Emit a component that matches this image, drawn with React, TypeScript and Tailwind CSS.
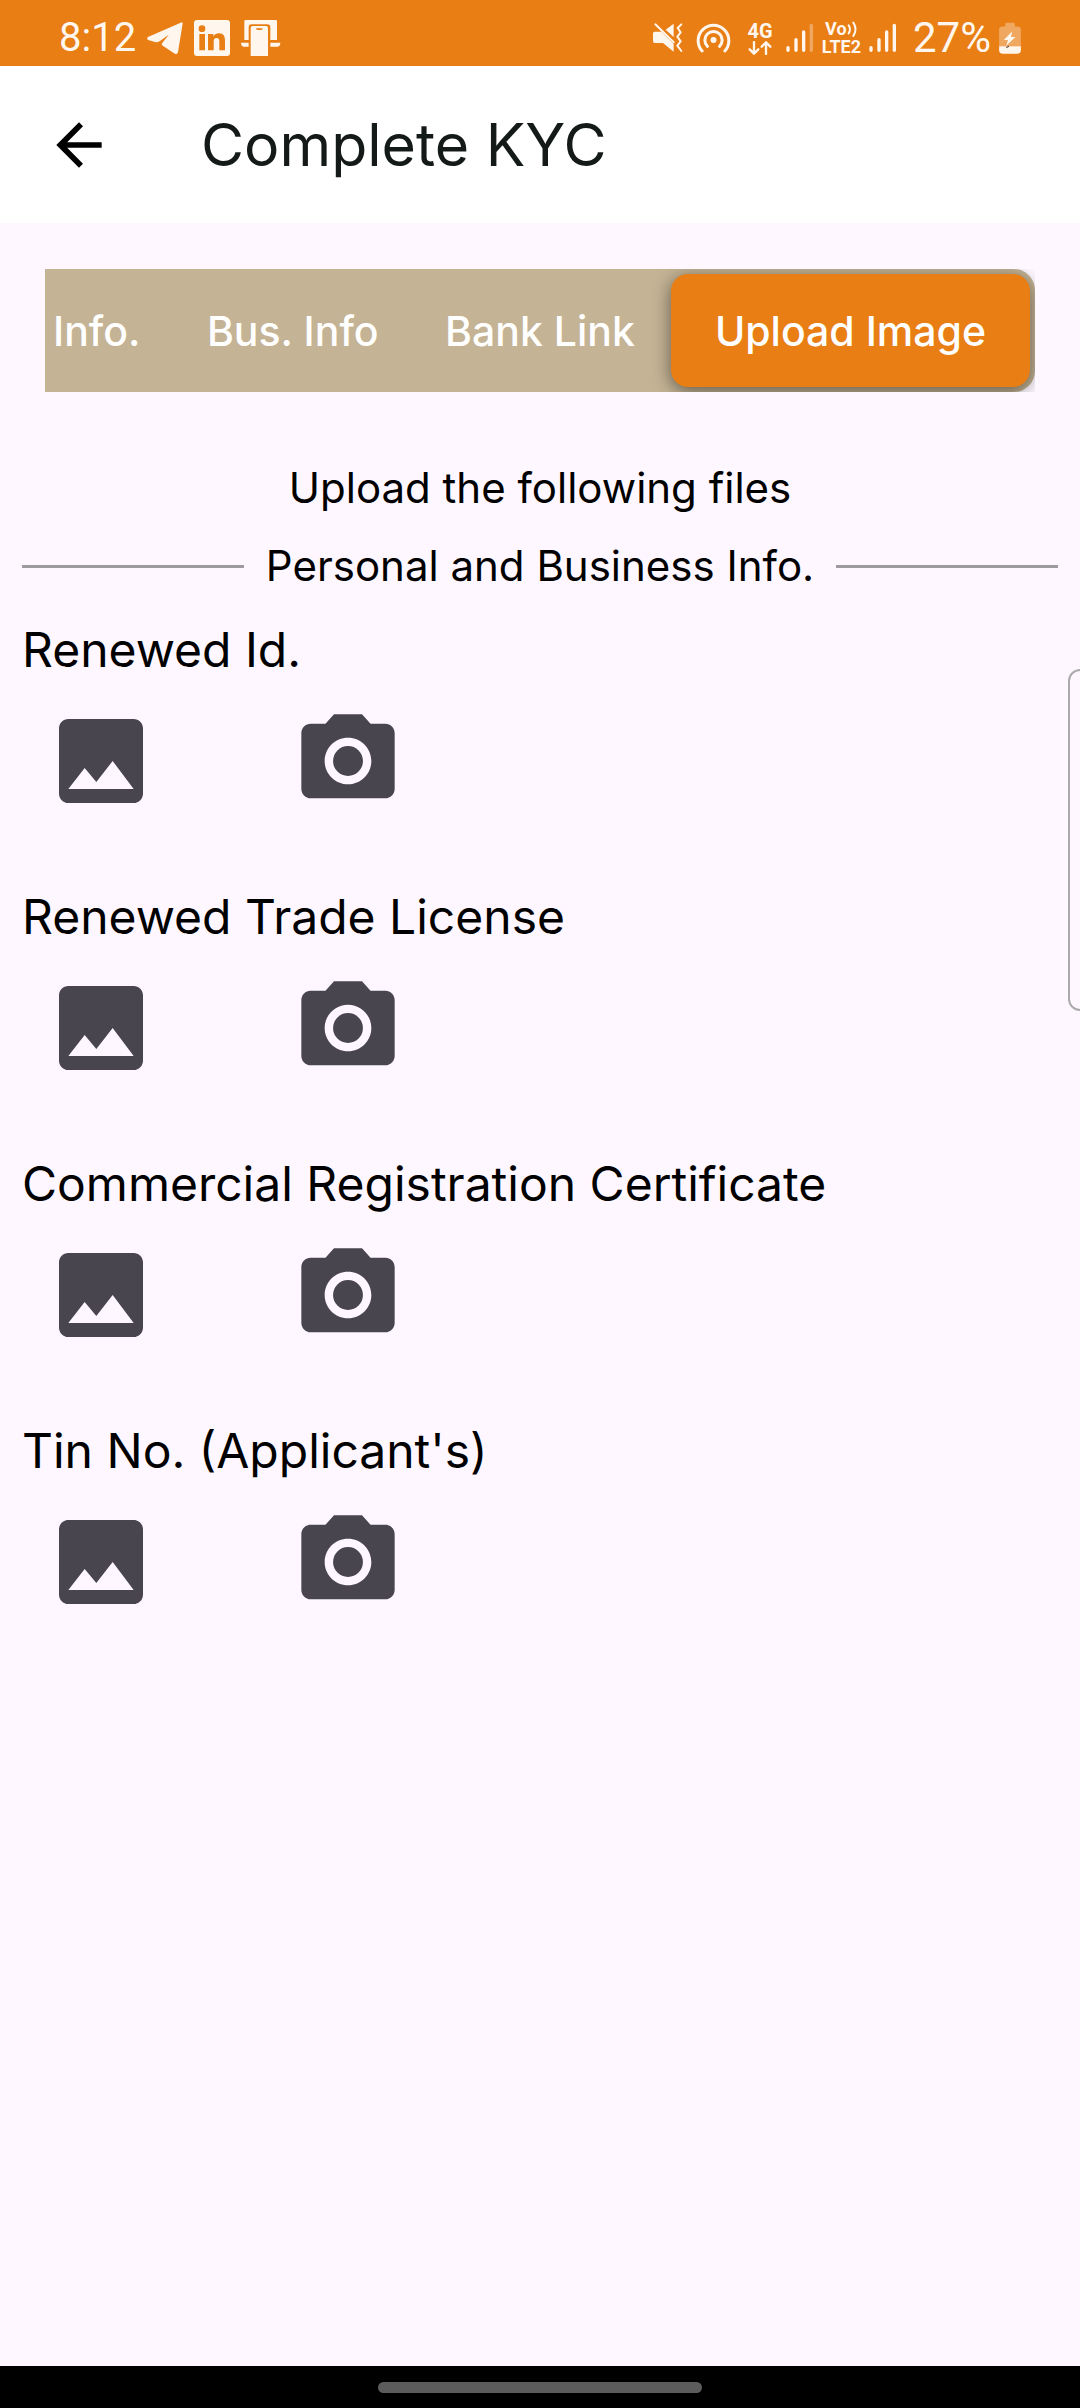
import type { ReactNode } from "react";

const tabs = ["Info.", "Bus. Info", "Bank Link"];

const documents = [
  "Renewed Id.",
  "Renewed Trade License",
  "Commercial Registration Certificate",
  "Tin No. (Applicant's)",
];

function TelegramIcon() {
  return (
    <svg className="h-8 w-9" viewBox="0 0 108 96" fill="currentColor" stroke="currentColor" strokeLinejoin="round" strokeWidth="6" aria-hidden="true">
      <path d="M104 4 4 48v3l21 6c4 1 8 0 11-2l36-25c2-1 4 1 2 3L48 65c-1 1-1 2 0 3l36 24c3 2 5 1 6-2Z" />
    </svg>
  );
}

function LinkedInIcon() {
  return (
    <svg className="h-9 w-9" viewBox="0 0 108 108" aria-hidden="true">
      <rect width="108" height="108" rx="9" fill="currentColor" />
      <g fill="#e87e14">
        <circle cx="24" cy="26" r="10" />
        <path d="M16 42h17v49H16zM42 42h16v7c4-6 10-9 17-9 14 0 18 9 18 23v28H76V66c0-7-1-12-8-12s-9 5-9 12v25H42z" />
      </g>
    </svg>
  );
}

function PhoneLinkIcon() {
  return (
    <svg className="h-9 w-10" viewBox="0 0 120 108" fill="currentColor" aria-hidden="true">
      <path d="M14 0h90q4 0 4 4v56H88V22q0-9-9-9H32q-9 0-9 9v38H10V4q0-4 4-4Z" />
      <path d="M0 68h23v12H8q-8-2-8-12ZM88 68h30q0 10-8 12H88Z" />
      <path fillRule="evenodd" d="M35 18h40q6 0 6 6v84H29V24q0-6 6-6Zm10 7q0 5 5 5h10q5 0 5-5Z" />
    </svg>
  );
}

function MutedVibrateIcon() {
  return (
    <svg className="h-[30px] w-[30px]" viewBox="0 0 90 90" aria-hidden="true">
      <path fill="currentColor" d="M5 26h20L62 63v23L30 60H5q-5 0-5-5V31q0-5 5-5ZM62 2v40L38 20Z" />
      <g fill="none" stroke="currentColor" strokeLinecap="round" strokeLinejoin="round">
        <path strokeWidth="6" d="m7 4 55 54" />
        <path strokeWidth="6" d="m85 4-11 11 9 13-10 13 10 14-10 13 12 16" />
      </g>
    </svg>
  );
}

function HotspotIcon() {
  return (
    <svg className="h-[30px] w-[35px]" viewBox="0 0 104 90" aria-hidden="true">
      <g fill="none" stroke="currentColor" strokeLinecap="round" strokeWidth="9">
        <path d="M18 84A46 46 0 1 1 86 84" />
        <path d="M34 70a26 26 0 1 1 36 0" />
      </g>
      <circle cx="52" cy="51" r="9" fill="currentColor" />
    </svg>
  );
}

function SignalIcon({ weak = false }: { weak?: boolean }) {
  return (
    <svg className="h-[30px] w-7" viewBox="0 0 84 90" stroke="currentColor" strokeLinecap="round" strokeWidth="10" aria-hidden="true">
      <path d="M6 74v8M30 50v32M53 27v55" />
      <path d="M76 7v75" opacity={weak ? 0.35 : 1} />
    </svg>
  );
}

function DataArrowsIcon() {
  return (
    <svg className="h-[14px] w-6" viewBox="0 0 72 42" fill="none" stroke="currentColor" strokeWidth="7" strokeLinecap="round" strokeLinejoin="round" aria-hidden="true">
      <path d="M18 3v34M5 25l13 13 13-13M54 39V5M41 17 54 4l13 13" />
    </svg>
  );
}

function VoiceWavesIcon() {
  return (
    <svg className="h-4 w-[11px]" viewBox="0 0 33 48" fill="none" stroke="currentColor" strokeWidth="6" strokeLinecap="round" aria-hidden="true">
      <path d="M5 13q8 12 0 24M19 5q13 20 0 40" />
    </svg>
  );
}

function BatteryIcon() {
  return (
    <svg className="h-8 w-[22px]" viewBox="0 0 64 94" aria-hidden="true">
      <path fill="currentColor" opacity="0.35" d="M22 2h20q4 0 4 4v7h8q10 0 10 10v48H0V23q0-10 10-10h8V6q0-4 4-4Z" />
      <path fill="currentColor" d="M0 71h64v11q0 11-11 11H11Q0 93 0 82ZM38 28 14 53h12l-5 17 27-26H35Z" />
      <path stroke="#4a4038" strokeWidth="3" d="m21 75 8-4" />
    </svg>
  );
}

function ArrowBackIcon() {
  return (
    <svg className="h-17 w-17" viewBox="0 0 24 24" fill="currentColor" aria-hidden="true">
      <path d="M20 11H7.83l5.59-5.59L12 4l-8 8 8 8 1.41-1.41L7.83 13H20z" />
    </svg>
  );
}

function ImageIcon() {
  return (
    <svg className="h-28 w-28" viewBox="0 0 24 24" fill="currentColor" aria-hidden="true">
      <path d="M21 19V5c0-1.1-.9-2-2-2H5c-1.1 0-2 .9-2 2v14c0 1.1.9 2 2 2h14c1.1 0 2-.9 2-2zM8.5 13.5l2.5 3.01L14.5 12l4.5 6H5z" />
    </svg>
  );
}

function CameraIcon() {
  return (
    <svg className="h-28 w-28" viewBox="0 0 24 24" fill="currentColor" aria-hidden="true">
      <circle cx="12" cy="12" r="3.2" />
      <path d="M9 2 7.17 4H4c-1.1 0-2 .9-2 2v12c0 1.1.9 2 2 2h16c1.1 0 2-.9 2-2V6c0-1.1-.9-2-2-2h-3.17L15 2H9zm3 15c-2.76 0-5-2.24-5-5s2.24-5 5-5 5 2.24 5 5-2.24 5-5 5z" />
    </svg>
  );
}

function IconButton({ label, children }: { label: string; children: ReactNode }) {
  return (
    <button type="button" aria-label={label} className="rounded-full p-[23px] text-[#49454f]">
      {children}
    </button>
  );
}

function StatusBar() {
  return (
    <div className="flex h-[66px] items-center justify-between bg-[#e87e14] pt-[9px] pr-[59px] pl-[59px] font-[Roboto,sans-serif] text-[#fff6ee]">
      <div className="flex items-center gap-[11px]">
        <span className="text-[40px] leading-10">8:12</span>
        <TelegramIcon />
        <LinkedInIcon />
        <PhoneLinkIcon />
      </div>
      <div className="flex items-center gap-2">
        <div className="flex items-center gap-[13px]">
          <MutedVibrateIcon />
          <HotspotIcon />
          <div className="flex flex-col items-center pl-1">
            <span className="text-xl leading-5 font-bold">4G</span>
            <DataArrowsIcon />
          </div>
          <SignalIcon weak />
        </div>
        <div className="flex items-center gap-2">
          <div className="flex flex-col items-center text-lg leading-[18px] font-bold">
            <span className="flex items-center">
              Vo
              <VoiceWavesIcon />
            </span>
            <span>LTE2</span>
          </div>
          <SignalIcon />
        </div>
        <span className="pl-2 text-[42px] leading-10">27%</span>
        <BatteryIcon />
      </div>
    </div>
  );
}

export default function App() {
  return (
    <div className="relative flex min-h-screen flex-col overflow-hidden bg-[#fef7ff] font-[Inter,sans-serif] text-black">
      <StatusBar />

      <header className="flex h-[157px] items-center gap-[88px] bg-white pl-[45px]">
        <button type="button" aria-label="Back">
          <ArrowBackIcon />
        </button>
        <h1 className="text-[59px] leading-17 text-[#141a17]">Complete KYC</h1>
      </header>

      <main className="flex flex-1 flex-col">
        <nav className="mx-[45px] mt-[46px] overflow-hidden" aria-label="KYC steps">
          <div role="tablist" className="flex h-[123px] items-center rounded-r-[21px] bg-[#c4b394] pr-[5px] pl-2 text-[41px] leading-12 font-medium text-white">
            <div className="flex flex-1 items-center justify-between pr-9">
              {tabs.map((tab) => (
                <button key={tab} type="button" role="tab" aria-selected={false} className="whitespace-nowrap">
                  {tab}
                </button>
              ))}
            </div>
            <button
              type="button"
              role="tab"
              aria-selected={true}
              className="h-[113px] rounded-[17px] bg-[#e87e14] px-11 whitespace-nowrap shadow-[0_4px_18px_rgba(0,0,0,0.5)]"
            >
              Upload Image
            </button>
          </div>
        </nav>

        <p className="mt-16 text-center text-[42px] leading-16">Upload the following files</p>
        <div className="mx-[22px] mt-[14px] flex items-center gap-[22px]">
          <span className="h-[3px] flex-1 bg-[#9e9b9f]" />
          <h2 className="text-[42px] leading-16">Personal and Business Info.</h2>
          <span className="h-[3px] flex-1 bg-[#9e9b9f]" />
        </div>

        <div className="mx-[22px] mt-5 flex flex-col gap-[45px]">
          {documents.map((name) => (
            <section key={name}>
              <h3 className="text-[48px] leading-16">{name}</h3>
              <div className="flex gap-[89px]">
                <IconButton label={`Choose image for ${name}`}>
                  <ImageIcon />
                </IconButton>
                <IconButton label={`Take photo for ${name}`}>
                  <CameraIcon />
                </IconButton>
              </div>
            </section>
          ))}
        </div>
      </main>

      <div className="absolute top-[669px] -right-4 h-[342px] w-7 rounded-xl border-2 border-[#ababab]" />

      <footer className="flex h-[42px] items-center justify-center bg-black">
        <div className="h-[11px] w-[324px] rounded-full bg-[#5c5c5c]" />
      </footer>
    </div>
  );
}
